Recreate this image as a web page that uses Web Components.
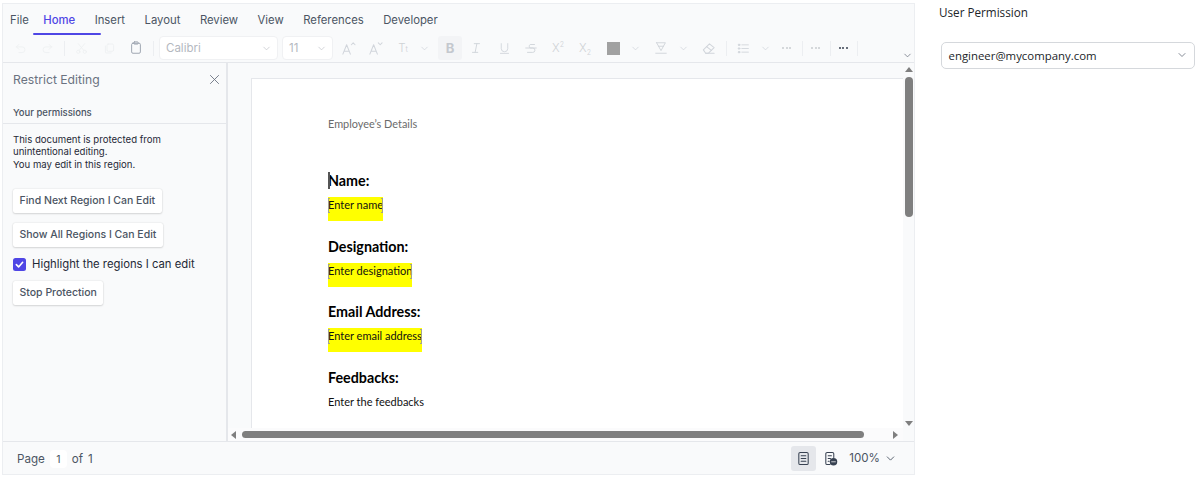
<!DOCTYPE html>
<html>
<head>
<meta charset="utf-8">
<title>Restrict Editing</title>
<style>
  html, body { margin:0; padding:0; background:#fff; }
  body { font-family:Inter, "Liberation Sans", sans-serif; }
</style>
</head>
<body>
<demo-app></demo-app>

<script>
// small icon set, all drawn on a 16x16 box
const icons = {
  undo:'<path d="M3 6h7a3.5 3.5 0 0 1 0 7H6M3 6l3-3M3 6l3 3"/>',
  redo:'<path d="M13 6H6a3.5 3.5 0 0 0 0 7h4M13 6l-3-3M13 6l-3 3"/>',
  cut:'<circle cx="4" cy="12" r="2"/><circle cx="12" cy="12" r="2"/><path d="M5 10.5 12 2M11 10.5 4 2"/>',
  copy:'<rect x="5" y="2.5" width="8" height="9" rx="1.5"/><path d="M3 5v7.5a1 1 0 0 0 1 1h6"/>',
  paste:'<rect x="3" y="2.5" width="10" height="11.5" rx="1.5"/><rect x="5.5" y="1" width="5" height="2.5" rx=".8"/>',
  close:'<path d="M3 3l10 10M13 3 3 13"/>',
  chev:'<path d="M4 6l4 4 4-4"/>',
  grow:'<path d="M2 14 6 4l4 10M3.5 11h5M11 4l2-2 2 2"/>',
  shrink:'<path d="M2 14 6 4l4 10M3.5 11h5M11 2l2 2 2-2"/>',
  italic:'<path d="M6 3h6M4 13h6M9 3 7 13"/>',
  underline:'<path d="M4 2v6a4 4 0 0 0 8 0V2M3 14h10"/>',
  strike:'<path d="M12 4H7a2.5 2.5 0 0 0 0 4h3a2.5 2.5 0 0 1 0 5H4M2 8h12"/>',
  highlight:'<path d="M3 2h10L8 11 3 2zM5 6h6M2 14h12"/>',
  eraser:'<path d="M2.5 9.5 9 3l5 4-6 6H5z"/><path d="M6 6l5 4M5 13h9"/>',
  list:'<circle cx="2.5" cy="3.5" r="1" fill="currentColor"/><circle cx="2.5" cy="8" r="1" fill="currentColor"/><circle cx="2.5" cy="12.5" r="1" fill="currentColor"/><path d="M6 3.5h8M6 8h8M6 12.5h8"/>',
  page:'<rect x="3" y="1.5" width="10" height="13" rx="1.5"/><path d="M5.5 5h5M5.5 8h5M5.5 11h5"/>',
  web:'<path d="M7.5 14.5h-3A1.5 1.5 0 0 1 3 13V3a1.5 1.5 0 0 1 1.5-1.5h5.5A1.5 1.5 0 0 1 11.5 3v4M5.5 5h3.5M5.5 8h2.5M5.5 11h1"/><circle cx="11.2" cy="11.5" r="4" fill="currentColor" stroke="none"/><path d="M9.2 11.5h4" stroke="#f9fafb" stroke-width=".8"/>'
};
function icon(name, size) {
  return `<svg width="${size}" height="${size}" viewBox="0 0 16 16" fill="none" stroke="currentColor" stroke-width="1.1" stroke-linecap="round" stroke-linejoin="round">${icons[name]}</svg>`;
}

// Buttons
class demoBtn extends HTMLElement {
  constructor() {
    super();
    this.attachShadow({mode:'open'});
    this.shadowRoot.innerHTML = `
      <style>
      :host { display:block; align-self:flex-start; }
      button {
        display:block; height:24px; padding:0 6.5px; border:0; border-radius:2px; background:#fff;
        box-shadow:0 0 1.5px rgba(0,0,0,.16), 0 1px 2px rgba(0,0,0,.12);
        font:500 10.5px Inter, sans-serif; color:#4b5563; white-space:nowrap;
      }
      </style>
      <button><slot></slot></button>`;
  }
}
customElements.define('demo-btn', demoBtn);

// Ribbon tabs and toolbar
class demoRibbon extends HTMLElement {
  constructor() {
    super();
    this.attachShadow({mode:'open'});
    const tool = (w, html, cls) => `<span class="t ${cls || ''}" style="width:${w}px">${html}</span>`;
    const gap = w => `<span style="width:${w}px;flex:none"></span>`;
    const faint = html => `<span class="faint">${html}</span>`;
    const sep = '<span class="sep"></span>';
    const dots = (w, cls) => `<span class="dots ${cls || ''}" style="width:${w}px"><i></i><i></i><i></i></span>`;
    this.shadowRoot.innerHTML = `
      <style>
      :host { display:block; height:58px; border-bottom:1px solid #e5e7eb; box-sizing:content-box; }
      .tabs { display:flex; height:31px; padding-left:7px; font-size:11.3px; color:#4b5563; align-items:center; }
      .tabs span { margin-right:19.5px; white-space:nowrap; position:relative; }
      .tabs .file { margin-right:14.5px; }
      .tabs .on { color:#4f46e5; font-weight:500; }
      .tabs .on::after { content:''; position:absolute; left:-10px; width:68px; bottom:-8px; height:2px; background:#4f46e5; border-radius:1px; }
      .tools { display:flex; align-items:center; height:26px; padding-left:4px; color:#d1d5db; font-size:11.5px; }
      .t { display:flex; align-items:center; justify-content:center; flex:none; height:24px; }
      .faint { color:#eef0f2; display:flex; }
      .sep { flex:none; width:1px; height:15px; background:#eceef1; }
      .combo { flex:none; box-sizing:border-box; display:flex; align-items:center; justify-content:space-between; height:24px; margin-right:4px;
        background:#fff; border:1px solid #f0f1f3; border-radius:4px; padding:0 5px 0 6px; color:#b4b8bf; }
      .combo svg { color:#c4c7cd; }
      .bold { background:#f3f4f6; border-radius:3px; font-weight:700; font-size:13px; color:#c4c8ce; }
      .swatch { width:13px; height:13px; background:#a1a1a1; display:block; }
      .dots { flex:none; display:flex; gap:1.5px; justify-content:center; }
      .dots i { width:2px; height:2px; background:#c9ccd1; border-radius:50%; }
      .dots.dark i { background:#374151; }
      .more { margin-left:auto; margin-right:0; margin-top:14px; color:#6b7280; }
      .txt { color:#cfd2d6; font-size:11.5px; font-weight:300; }
      .txt sup, .txt sub { font-size:7px; line-height:0; }
      </style>
      <div class="tabs">
        <span class="file">File</span><span class="on">Home</span><span>Insert</span><span>Layout</span><span>Review</span><span>View</span><span>References</span><span>Developer</span>
      </div>
      <div class="tools">
        ${tool(27, faint(icon('undo', 13)))}${tool(27, faint(icon('redo', 13)))}${gap(3)}${sep}
        ${tool(32, faint(icon('cut', 13)))}${tool(24, faint(icon('copy', 13)))}
        ${tool(30, `<span style="color:#9ca3af;display:flex">${icon('paste', 14)}</span>`)}${gap(2)}${sep}${gap(5)}
        <span class="combo" style="width:119px">Calibri ${icon('chev', 11)}</span>
        <span class="combo" style="width:51px">11 ${icon('chev', 11)}</span>
        ${tool(22, icon('grow', 15))}${tool(32, icon('shrink', 15))}
        ${tool(24, '<span class="txt">T<small style="font-size:8px">t</small></span>')}
        ${tool(18, icon('chev', 11))}${gap(5)}
        ${tool(24, 'B', 'bold')}
        ${tool(28, icon('italic', 14))}${tool(28, icon('underline', 13))}${tool(26, icon('strike', 14))}
        ${tool(28, '<span class="txt">X<sup>2</sup></span>')}${tool(26, '<span class="txt">X<sub>2</sub></span>')}${gap(9)}
        ${tool(13, '<span class="swatch"></span>')}${tool(30, icon('chev', 11))}
        ${tool(22, icon('highlight', 14))}${tool(22, icon('chev', 11))}
        ${tool(28, icon('eraser', 15))}${gap(4)}${sep}
        ${tool(32, icon('list', 13))}${tool(12, icon('chev', 11))}
        ${dots(31)}${sep}${dots(25)}${gap(2)}${sep}${dots(24, 'dark')}${gap(2)}${sep}
        ${tool(14, icon('chev', 11), 'more')}
      </div>`;
  }
}
customElements.define('demo-ribbon', demoRibbon);

// Restrict editing pane
class demoPane extends HTMLElement {
  constructor() {
    super();
    this.attachShadow({mode:'open'});
    this.shadowRoot.innerHTML = `
      <style>
      :host { display:flex; flex-direction:column; width:225px; flex:none; box-sizing:border-box; border-right:2px solid #e5e7eb; }
      .head { display:flex; justify-content:space-between; align-items:center; height:32px; padding:0 5px 0 10px; font-size:12.2px; color:#6b7280; }
      .head svg { color:#6b7280; }
      .perm { height:29px; padding:8px 10px 0; box-sizing:border-box; font-size:9.5px; font-weight:500; line-height:20px; color:#4b5563; border-bottom:1px solid #e5e7eb; }
      .body { padding:10px 10px 0; display:flex; flex-direction:column; }
      .msg { font-size:9.6px; line-height:12.3px; color:#1f2937; margin-bottom:18px; }
      .check { display:flex; align-items:center; gap:6px; margin:10px 0 9px; height:15px; font-size:11.3px; color:#1f2937; white-space:nowrap; }
      .box { width:13px; height:13px; border-radius:2.5px; background:#4f46e5; display:flex; align-items:center; justify-content:center; flex:none; }
      demo-btn + demo-btn { margin-top:10px; }
      </style>
      <div class="head">Restrict Editing ${icon('close', 13)}</div>
      <div class="perm">Your permissions</div>
      <div class="body">
        <div class="msg">This document is protected from<br>unintentional editing.<br>You may edit in this region.</div>
        <demo-btn>Find Next Region I Can Edit</demo-btn>
        <demo-btn>Show All Regions I Can Edit</demo-btn>
        <label class="check"><span class="box"><svg width="9" height="9" viewBox="0 0 10 10" fill="none" stroke="#fff" stroke-width="1.8" stroke-linecap="round" stroke-linejoin="round"><path d="M1.5 5.2 4 7.7 8.5 2.5"/></svg></span>Highlight the regions I can edit</label>
        <demo-btn>Stop Protection</demo-btn>
      </div>`;
  }
}
customElements.define('demo-pane', demoPane);

// One heading + field block on the page
class demoField extends HTMLElement {
  constructor() {
    super();
    this.attachShadow({mode:'open'});
    const plain = this.hasAttribute('plain');
    this.shadowRoot.innerHTML = `
      <style>
      :host { display:block; height:65.5px; font-family:Lato, "Noto Sans", sans-serif; color:#000; }
      .h { height:24px; line-height:24px; font-size:14.3px; font-weight:700; position:relative; }
      .v { display:table; margin-top:4px; height:24px; line-height:16px; font-size:11px; color:#111; position:relative; white-space:nowrap; }
      .hl { background:#ffff00; }
      .hl::before, .hl::after { content:''; position:absolute; top:1px; height:15px; width:2px; box-sizing:border-box; border:1px solid #a3a38a; }
      .hl::before { left:0; border-right:0; }
      .hl::after { right:0; border-left:0; }
      .caret { position:absolute; left:0; top:3px; width:1.5px; height:17px; background:#555; }
      </style>
      <div class="h">${this.hasAttribute('caret') ? '<span class="caret"></span>' : ''}${this.getAttribute('label')}</div>
      <div class="v ${plain ? '' : 'hl'}"><slot></slot></div>`;
  }
}
customElements.define('demo-field', demoField);

// Document area with scrollbars
class demoDoc extends HTMLElement {
  constructor() {
    super();
    this.attachShadow({mode:'open'});
    this.shadowRoot.innerHTML = `
      <style>
      :host { display:grid; flex:1; min-width:0; grid-template-columns:1fr 11px; grid-template-rows:1fr 13px; background:#f9fafb; }
      .view { overflow:hidden; padding:16px 0 0 24px; min-height:0; }
      .page { background:#fff; box-shadow:0 0 0 1px #e5e7eb; height:400px; padding:36px 0 0 76px; box-sizing:border-box; }
      .title { font:10.9px/18px Lato, "Noto Sans", sans-serif; color:#6b6b6b; height:54px; }
      .vbar { display:flex; flex-direction:column; align-items:center; background:#f9fafb; }
      .hbar { display:flex; align-items:center; background:#fbfbfc; grid-column:1; padding-left:3px; }
      .corner { background:#f9fafb; }
      .thumb { background:#7f7f7f; border-radius:4px; }
      .vbar .thumb { width:8px; height:140px; margin-top:5px; }
      .hbar .thumb { height:7px; width:622px; margin-left:6px; }
      .up { width:0; height:0; margin-top:4px; border:4.5px solid transparent; border-top:0; border-bottom:5px solid #7f7f7f; }
      .down { width:0; height:0; margin-top:auto; margin-bottom:2px; border:4.5px solid transparent; border-bottom:0; border-top:5px solid #7f7f7f; }
      .left { width:0; height:0; border:4.5px solid transparent; border-left:0; border-right:5px solid #7f7f7f; }
      .right { width:0; height:0; margin-left:auto; margin-right:5px; border:4.5px solid transparent; border-right:0; border-left:5px solid #7f7f7f; }
      </style>
      <div class="view">
        <div class="page">
          <div class="title">Employee’s Details</div>
          <slot></slot>
        </div>
      </div>
      <div class="vbar"><span class="up"></span><span class="thumb"></span><span class="down"></span></div>
      <div class="hbar"><span class="left"></span><span class="thumb"></span><span class="right"></span></div>
      <div class="corner"></div>`;
  }
}
customElements.define('demo-doc', demoDoc);

// Status bar
class demoStatus extends HTMLElement {
  constructor() {
    super();
    this.attachShadow({mode:'open'});
    this.shadowRoot.innerHTML = `
      <style>
      :host { display:flex; align-items:center; height:32px; padding:0 17px 0 14px; border-top:1px solid #e5e7eb; font-size:11.6px; color:#4b5563; }
      .num { width:17px; height:18px; margin:1px 5px 0 5px; background:#fff; border-radius:4px; display:flex; align-items:center; justify-content:center; font-size:10.5px; padding-top:2px; box-sizing:border-box; }
      .of { margin-right:5px; }
      .lbl { padding-top:1px; }
      .right { margin-left:auto; display:flex; align-items:center; }
      .ib { width:25px; height:25px; border-radius:3px; display:flex; align-items:center; justify-content:center; color:#374151; }
      .ib.on { background:#e5e7eb; }
      .ib + .ib { margin-left:2px; margin-right:6px; }
      .zoom { font-size:11.6px; margin-right:4px; }
      </style>
      <span class="lbl">Page</span><span class="num">1</span><span class="of lbl">of</span><span class="lbl">1</span>
      <div class="right">
        <span class="ib on">${icon('page', 15)}</span>
        <span class="ib">${icon('web', 15)}</span>
        <span class="zoom">100%</span>
        <span style="display:flex">${icon('chev', 13)}</span>
      </div>`;
  }
}
customElements.define('demo-status', demoStatus);

// Right side user dropdown
class demoPerm extends HTMLElement {
  constructor() {
    super();
    this.attachShadow({mode:'open'});
    this.shadowRoot.innerHTML = `
      <style>
      :host { display:block; flex:none; width:285px; padding:2px 5px 0 24px; box-sizing:border-box; font-family:"Open Sans", sans-serif; color:#212529; }
      h4 { margin:0 0 20px; font-size:11.7px; font-weight:400; line-height:20px; }
      .sel { display:flex; align-items:center; justify-content:space-between; height:24px; margin-left:2px; padding:0 6px 1px 6.5px; box-sizing:content-box; border:1px solid #d5d8dc; border-radius:5px; font-size:11.4px; color:#212529; }
      .sel svg { color:#6b7280; }
      </style>
      <h4>User Permission</h4>
      <div class="sel">engineer@mycompany.com ${icon('chev', 12)}</div>`;
  }
}
customElements.define('demo-perm', demoPerm);

// Whole page
class demoApp extends HTMLElement {
  constructor() {
    super();
    this.attachShadow({mode:'open'});
    this.shadowRoot.innerHTML = `
      <style>
      :host { display:flex; width:1200px; height:477px; overflow:hidden; font-family:Inter, sans-serif; }
      .editor { flex:none; width:913px; height:472px; margin:3px 0 0 2px; box-sizing:border-box; background:#f9fafb; border:1px solid #eceef1; display:flex; flex-direction:column; }
      .mid { flex:1; display:flex; min-height:0; }
      </style>
      <div class="editor">
        <demo-ribbon></demo-ribbon>
        <div class="mid">
          <demo-pane></demo-pane>
          <demo-doc>
            <demo-field label="Name:" caret>Enter name</demo-field>
            <demo-field label="Designation:">Enter designation</demo-field>
            <demo-field label="Email Address:">Enter email address</demo-field>
            <demo-field label="Feedbacks:" plain>Enter the feedbacks</demo-field>
          </demo-doc>
        </div>
        <demo-status></demo-status>
      </div>
      <demo-perm></demo-perm>`;
  }
}
customElements.define('demo-app', demoApp);
</script>
</body>
</html>
